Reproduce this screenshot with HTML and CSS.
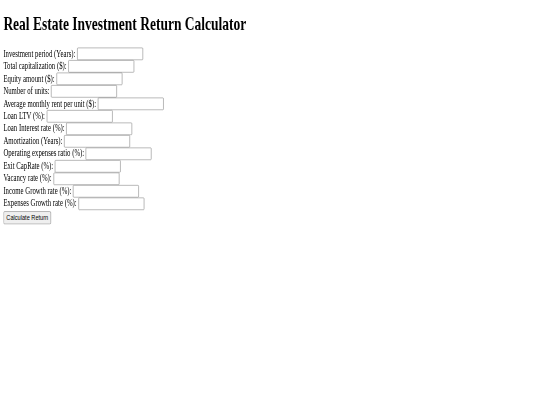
FILE: index.html
```html
<!DOCTYPE html>
<html lang="en">
<head>
    <meta charset="UTF-8" />
    <title>Real Estate Investment Return Calculator</title>
    <link rel="stylesheet" href="styles.css">
</head>
<body>
<div class="screen">
    <h1>Real Estate Investment Return Calculator</h1>

    <form id="calcForm">
        <label for="period">Investment period (Years):</label>
        <input type="text" id="period"><br>
        <label for="capital">Total capitalization ($):</label>
        <input type="text" id="capital"><br>
        <label for="equity">Equity amount ($):</label>
        <input type="text" id="equity"><br>
        <label for="units">Number of units:</label>
        <input type="text" id="units"><br>
        <label for="rent">Average monthly rent per unit ($):</label>
        <input type="text" id="rent"><br>
        <label for="ltv">Loan LTV (%):</label>
        <input type="text" id="ltv"><br>
        <label for="interest">Loan Interest rate (%):</label>
        <input type="text" id="interest"><br>
        <label for="amort">Amortization (Years):</label>
        <input type="text" id="amort"><br>
        <label for="opex">Operating expenses ratio (%):</label>
        <input type="text" id="opex"><br>
        <label for="cap">Exit CapRate (%):</label>
        <input type="text" id="cap"><br>
        <label for="vacancy">Vacancy rate (%):</label>
        <input type="text" id="vacancy"><br>
        <label for="incGrowth">Income Growth rate (%):</label>
        <input type="text" id="incGrowth"><br>
        <label for="expGrowth">Expenses Growth rate (%):</label>
        <input type="text" id="expGrowth"><br>
        <button type="button">Calculate Return</button>
    </form>
</div>
</body>
</html>
```

FILE: styles.css
```css
html, body {
    margin: 0;
    overflow: hidden;
    background: #fff;
}
.screen {
    display: flow-root;
    width: max-content;
    padding: 0 8px 8px 8px;
    font-family: "Liberation Serif", "Times New Roman", serif;
    font-size: 16px;
    color: #000;
    transform: scale(0.421875, 0.595);
    transform-origin: 0 0;
}
h1 {
    font-size: 32px;
    margin: 21.44px 0;
}
form {
    margin: 0;
}
input {
    width: 150px;
    height: 17px;
    padding: 1px 2px;
    border: 1px solid #767676;
    border-radius: 2px;
    font-family: "Liberation Sans", Arial, sans-serif;
    font-size: 13.333px;
    margin: 0;
}
button {
    box-sizing: border-box;
    height: 22px;
    font-family: "Liberation Sans", Arial, sans-serif;
    font-size: 13.333px;
    padding: 1px 6px;
    border: 1px solid #767676;
    border-radius: 3px;
    background: #efefef;
    color: #000;
    margin: 2px 0 0 0;
}
```
